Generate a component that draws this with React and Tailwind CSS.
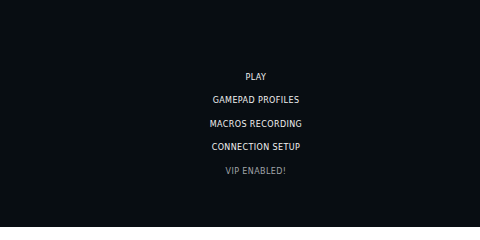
import React from "react";

const items = [
  { label: "PLAY", dim: false },
  { label: "GAMEPAD PROFILES", dim: false },
  { label: "MACROS RECORDING", dim: false },
  { label: "CONNECTION SETUP", dim: false },
  { label: "VIP ENABLED!", dim: true },
];

const App = () => {
  return (
    <div className="w-[480px] h-[227px] bg-[#080d12] overflow-hidden">
      <div className="flex flex-col items-center pt-[66px] pl-[32px]">
        {items.map((item) => (
          <div
            key={item.label}
            className={
              "h-[23.5px] flex items-center text-[8px] tracking-[0.4px] font-['DejaVu_Sans',sans-serif] " +
              (item.dim ? "text-[#a0a4a8]" : "text-[#f0f0f0]")
            }
          >
            {item.label}
          </div>
        ))}
      </div>
    </div>
  );
};

export default App;
